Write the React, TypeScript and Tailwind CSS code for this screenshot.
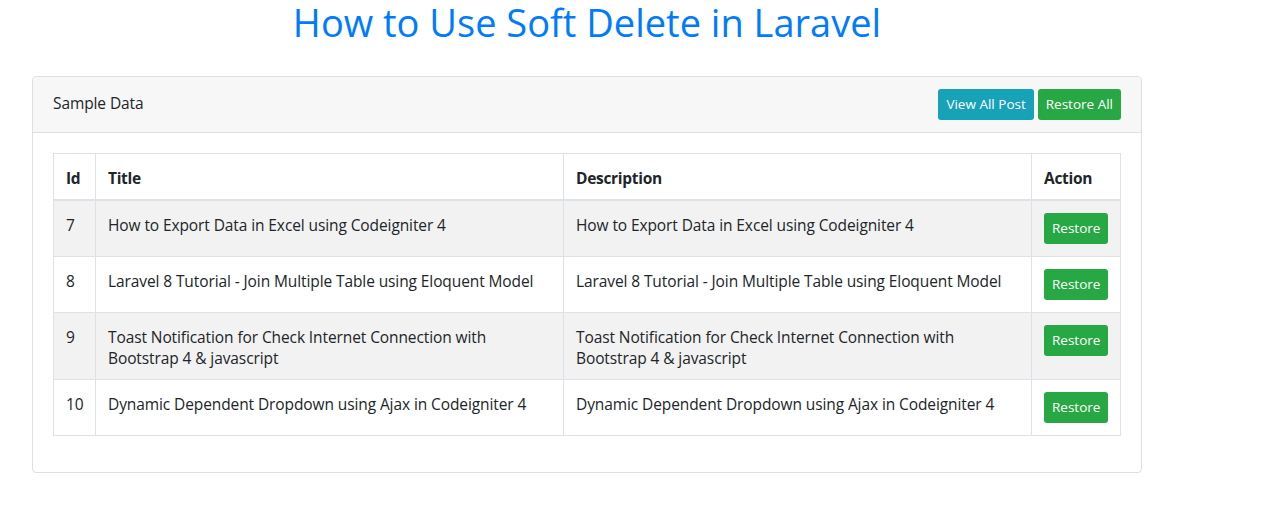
import React from "react";

const rows = [
  { id: "7", title: "How to Export Data in Excel using Codeigniter 4" },
  { id: "8", title: "Laravel 8 Tutorial - Join Multiple Table using Eloquent Model" },
  { id: "9", title: "Toast Notification for Check Internet Connection with Bootstrap 4 & javascript" },
  { id: "10", title: "Dynamic Dependent Dropdown using Ajax in Codeigniter 4" },
];

export default function App() {
  return (
    <div
      className="min-h-[531px] bg-white text-[#212529] text-[15.5px] leading-[21px] tracking-[-0.1px]"
      style={{ fontFamily: '"Open Sans", "Noto Sans", sans-serif' }}
    >
      <div className="ml-[32px] w-[1110px]">
        <h1 className="text-center text-[38px] leading-[44px] text-[#007bff] font-normal tracking-normal">
          How to Use Soft Delete in Laravel
        </h1>
        <div className="mt-[32px] border border-[#dfdfdf] rounded-[4px]">
          <div className="flex items-center justify-between bg-[#f7f7f7] border-b border-[#dfdfdf] px-[20px] h-[56px] rounded-t-[4px]">
            <span className="-mt-[2px]">Sample Data</span>
            <div className="flex gap-[4px] tracking-normal">
              <button className="h-[31px] px-[8px] text-[13.5px] text-white bg-[#17a2b8] rounded-[3px]">
                View All Post
              </button>
              <button className="h-[31px] px-[8px] text-[13.5px] text-white bg-[#28a745] rounded-[3px]">
                Restore All
              </button>
            </div>
          </div>
          <div className="p-[20px] pb-[36px]">
            <table className="w-[1067px] border-collapse table-fixed">
              <colgroup>
                <col className="w-[42px]" />
                <col className="w-[468px]" />
                <col className="w-[468px]" />
                <col className="w-[89px]" />
              </colgroup>
              <thead>
                <tr>
                  <th className="border border-[#dee2e6] border-b-2 px-[12px] pt-[14px] pb-[10px] text-left font-bold tracking-[-0.3px]">Id</th>
                  <th className="border border-[#dee2e6] border-b-2 px-[12px] pt-[14px] pb-[10px] text-left font-bold tracking-[-0.3px]">Title</th>
                  <th className="border border-[#dee2e6] border-b-2 px-[12px] pt-[14px] pb-[10px] text-left font-bold tracking-[-0.3px]">Description</th>
                  <th className="border border-[#dee2e6] border-b-2 px-[12px] pt-[14px] pb-[10px] text-left font-bold tracking-[-0.3px]">Action</th>
                </tr>
              </thead>
              <tbody>
                {rows.map((r, i) => (
                  <tr key={r.id} className={i % 2 === 0 ? "bg-[#f2f2f2]" : "bg-white"}>
                    <td className="border border-[#dee2e6] px-[12px] pt-[14px] pb-[10px] align-top">{r.id}</td>
                    <td className="border border-[#dee2e6] px-[12px] pt-[14px] pb-[10px] align-top">{r.title}</td>
                    <td className="border border-[#dee2e6] px-[12px] pt-[14px] pb-[10px] align-top">{r.title}</td>
                    <td className="border border-[#dee2e6] p-[12px] align-top">
                      <button className="block h-[31px] px-[8px] text-[13.5px] tracking-normal text-white bg-[#28a745] rounded-[3px]">
                        Restore
                      </button>
                    </td>
                  </tr>
                ))}
              </tbody>
            </table>
          </div>
        </div>
      </div>
    </div>
  );
}
